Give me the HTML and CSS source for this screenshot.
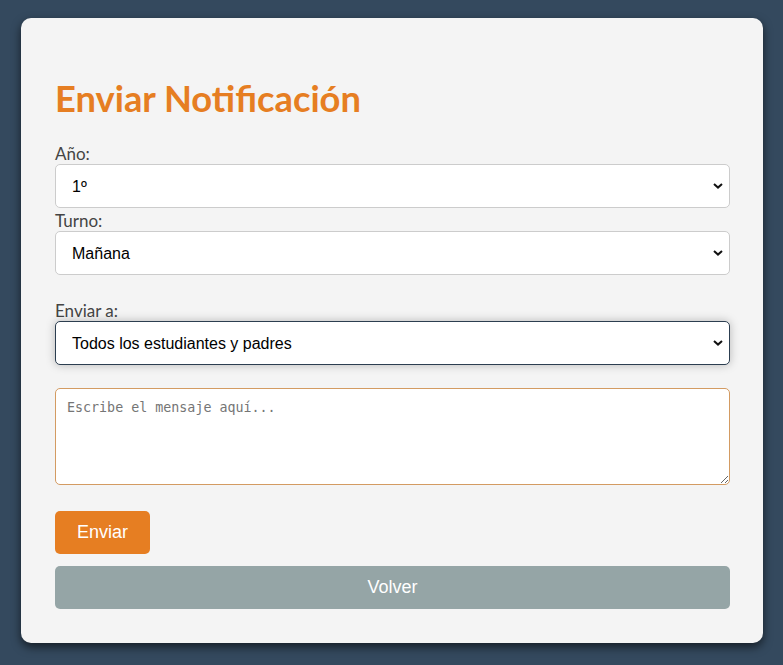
FILE: index.html
```html
<!DOCTYPE html>
<html lang="es">
<head>
<meta charset="utf-8">
<title>Enviar Notificación</title>
<link rel="stylesheet" href="styles.css">
</head>
<body>
<div class="card">
  <h1 class="title">Enviar Notificación</h1>
  <form class="form">
    <label class="label" for="anio">Año:</label>
    <div class="select-wrap select-wrap-first">
      <select id="anio" class="select"><option>1º</option></select>
      <svg class="chev" width="10" height="6" viewBox="0 0 10 6"><path d="M1 1 L5 4.6 L9 1" fill="none" stroke="#111" stroke-width="2"/></svg>
    </div>
    <label class="label" for="turno">Turno:</label>
    <div class="select-wrap">
      <select id="turno" class="select"><option>Mañana</option></select>
      <svg class="chev" width="10" height="6" viewBox="0 0 10 6"><path d="M1 1 L5 4.6 L9 1" fill="none" stroke="#111" stroke-width="2"/></svg>
    </div>
    <label class="label label-gap" for="dest">Enviar a:</label>
    <div class="select-wrap">
      <select id="dest" class="select select-focus"><option>Todos los estudiantes y padres</option></select>
      <svg class="chev" width="10" height="6" viewBox="0 0 10 6"><path d="M1 1 L5 4.6 L9 1" fill="none" stroke="#111" stroke-width="2"/></svg>
    </div>
    <textarea class="message" placeholder="Escribe el mensaje aquí..."></textarea>
    <div class="actions">
      <button type="button" class="btn btn-send">Enviar</button>
      <button type="button" class="btn btn-back">Volver</button>
    </div>
  </form>
</div>
</body>
</html>
```
FILE: styles.css
```css
html, body {
  margin: 0;
  padding: 0;
}
body {
  background: #34495e;
  font-family: Lato, "Liberation Sans", sans-serif;
  padding: 18px 20px 22px 21px;
  height: 665px;
  box-sizing: border-box;
}
.card {
  width: 742px;
  height: 625px;
  box-sizing: border-box;
  background: #f4f4f4;
  border-radius: 10px;
  box-shadow: 0 4px 10px rgba(0, 0, 0, 0.6);
  padding: 59px 33px 0 34px;
}
.title {
  margin: 0 0 24px;
  font-family: Lato, sans-serif;
  font-weight: 700;
  font-size: 36.3px;
  line-height: 43px;
  color: #e67e22;
}
.form {
  display: flex;
  flex-direction: column;
}
.label {
  display: block;
  font-size: 17px;
  line-height: 20px;
  color: #444;
}
.label-gap {
  margin-top: 24px;
}
.select-wrap {
  position: relative;
  margin-bottom: 2px;
}
.select-wrap-first {
  margin-bottom: 3px;
}
.select {
  appearance: none;
  -webkit-appearance: none;
  display: block;
  width: 100%;
  height: 44px;
  box-sizing: border-box;
  border: 1px solid #ccc;
  border-radius: 5px;
  background: #fff;
  padding: 0 16px;
  font-family: "Liberation Sans", Arial, sans-serif;
  font-size: 16px;
  color: #000;
  outline: none;
}
.select-focus {
  border-color: #2c3e50;
  box-shadow: 0 0 10px rgba(0, 0, 0, 0.25);
}
.chev {
  position: absolute;
  right: 7px;
  top: 19px;
  pointer-events: none;
}
.message {
  display: block;
  margin-top: 21px;
  width: 100%;
  height: 97px;
  box-sizing: border-box;
  border: 1px solid #d39b62;
  border-radius: 5px;
  background: #fff;
  padding: 11px;
  font-family: "DejaVu Sans Mono", monospace;
  font-size: 13.33px;
  resize: vertical;
  outline: none;
}
.message::placeholder {
  color: #757575;
}
.actions {
  display: flex;
  flex-direction: column;
  align-items: flex-start;
  gap: 12px;
  margin-top: 26px;
}
.btn {
  border: none;
  border-radius: 5px;
  height: 43px;
  font-family: "Liberation Sans", Arial, sans-serif;
  font-size: 18px;
  color: #fff;
  cursor: pointer;
}
.btn-send {
  width: 95px;
  background: #e67e22;
}
.btn-back {
  width: 100%;
  background: #95a5a6;
}
```
